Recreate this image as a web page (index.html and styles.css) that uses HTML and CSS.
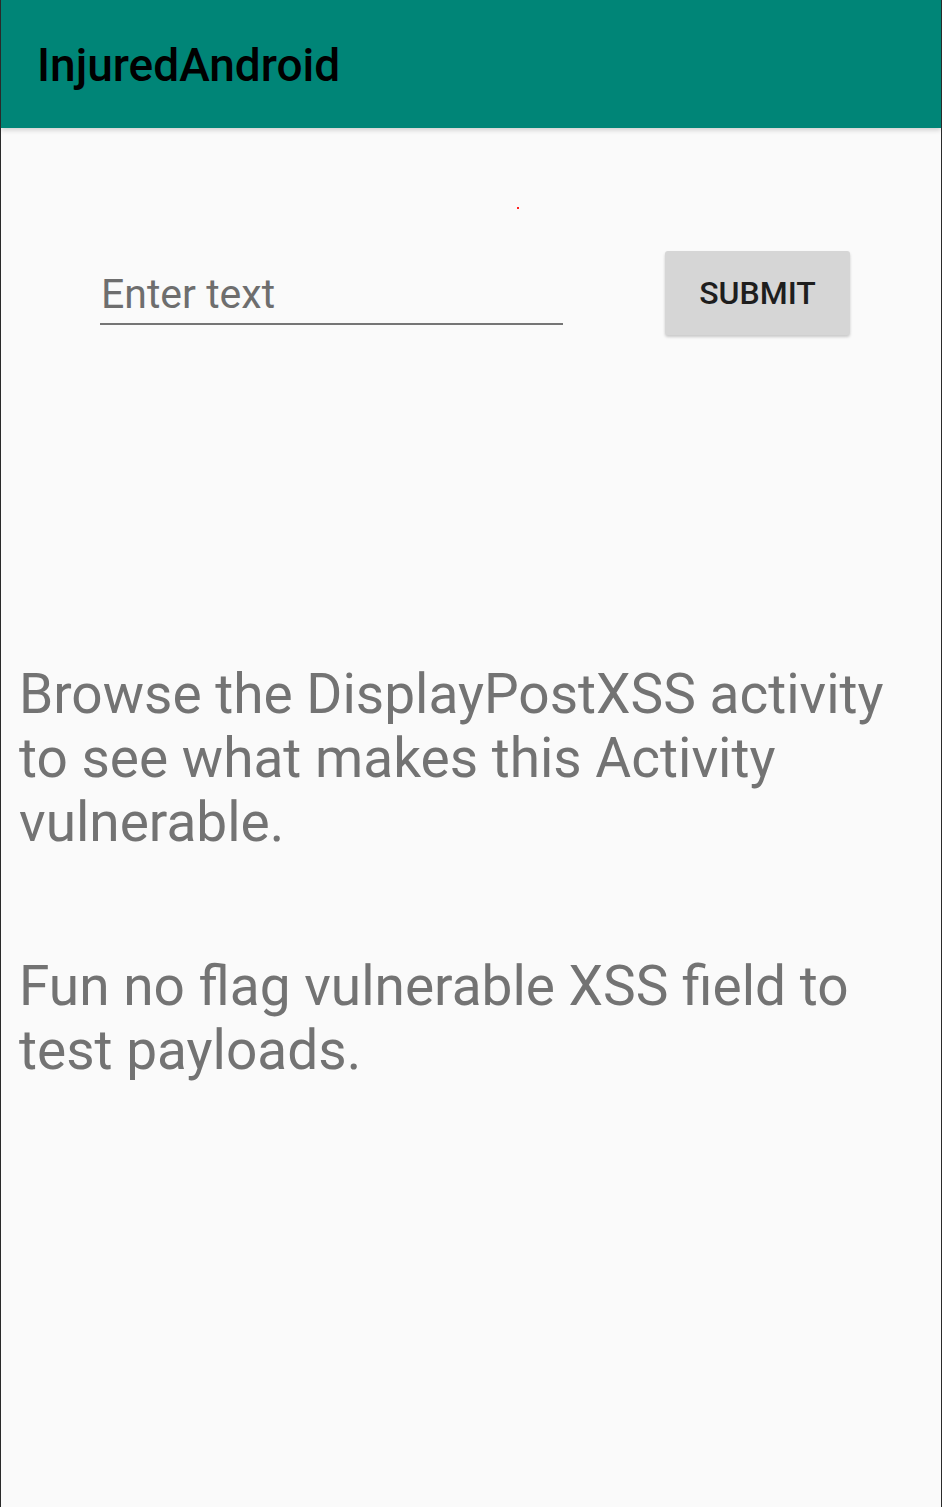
FILE: index.html
```html
<!DOCTYPE html>
<html>
<head>
<meta charset="utf-8">
<link rel="stylesheet" href="styles.css">
</head>
<body>
<div class="screen">
  <header class="toolbar"><span class="title">InjuredAndroid</span></header>
  <main class="content">
    <span class="dot"></span>
    <div class="form-row">
      <div class="field"><span class="hint">Enter text</span></div>
      <button class="submit">SUBMIT</button>
    </div>
    <p class="para first">Browse the DisplayPostXSS activity to see what makes this Activity vulnerable.</p>
    <p class="para second">Fun no flag vulnerable XSS field to test payloads.</p>
  </main>
</div>
</body>
</html>
```
FILE: styles.css
```css
html, body {
  margin: 0;
  padding: 0;
  background: #fafafa;
}
.screen {
  width: 942px;
  height: 1507px;
  box-sizing: border-box;
  border-left: 1px solid #2a2a2a;
  border-right: 1px solid #2a2a2a;
  background: #fafafa;
  font-family: Roboto, "Liberation Sans", sans-serif;
  display: flex;
  flex-direction: column;
  overflow: hidden;
}
.toolbar {
  height: 128px;
  flex: none;
  background: #008577;
  display: flex;
  align-items: center;
  padding-left: 36px;
  box-shadow: 0 2px 5px rgba(0,0,0,0.18);
  position: relative;
  z-index: 1;
}
.title {
  font-size: 46px;
  font-weight: 500;
  color: #000;
  margin-top: 2px;
}
.content {
  position: relative;
  flex: 1;
}
.dot {
  position: absolute;
  left: 516px;
  top: 79px;
  width: 2px;
  height: 2px;
  background: #ff2020;
}
.form-row {
  display: flex;
  align-items: flex-start;
  margin-top: 123px;
  padding-left: 99px;
}
.field {
  width: 463px;
  height: 73px;
  box-sizing: border-box;
  border-bottom: 2px solid #757575;
  display: flex;
  align-items: flex-end;
  padding-left: 1px;
  padding-bottom: 5px;
  margin-top: 1px;
}
.hint {
  font-size: 41px;
  color: #6e6e6e;
  line-height: 48px;
}
.submit {
  margin-left: 102px;
  width: 185px;
  height: 84px;
  border: none;
  border-radius: 3px;
  background: #d6d6d6;
  box-shadow: 0 2px 3px rgba(0,0,0,0.2);
  font-family: Roboto, "Liberation Sans", sans-serif;
  font-weight: 500;
  font-size: 32px;
  color: #1e1e1e;
  padding: 0;
}
.para {
  margin: 0;
  padding-left: 18px;
  padding-right: 40px;
  font-size: 55px;
  line-height: 64px;
  color: #737373;
}
.first {
  margin-top: 327px;
}
.second {
  margin-top: 100px;
}
```
